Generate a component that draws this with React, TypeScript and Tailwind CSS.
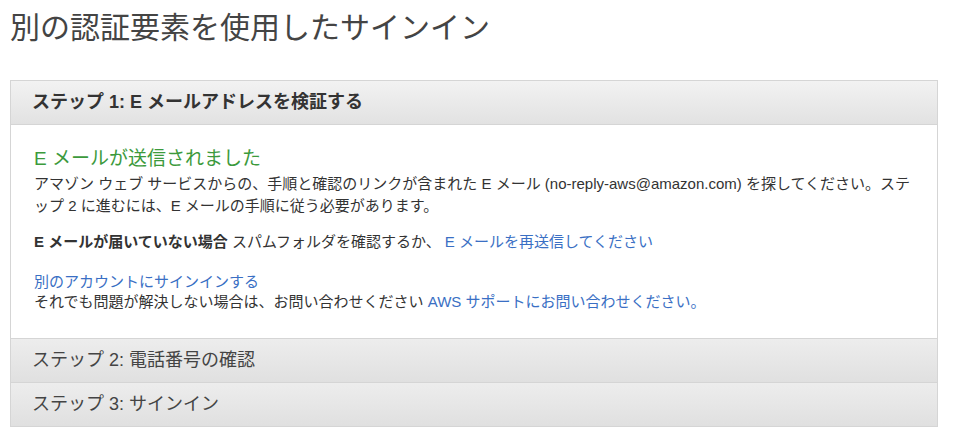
export default function App() {
  return (
    <div className="min-h-screen bg-white font-['Liberation_Sans','Noto_Sans_CJK_JP',sans-serif] text-[#333]">
      <div className="px-[10px] pt-[10px]">
        <h1 className="text-[30px] leading-[36px] font-normal text-[#444]">別の認証要素を使用したサインイン</h1>

        <div className="mt-[34px] w-[928px] border border-[#d5d5d5]">
          <div className="h-[44px] flex items-center px-[21px] bg-gradient-to-b from-[#f2f2f2] to-[#e2e2e2] border-b border-[#d5d5d5]">
            <span className="text-[18px] font-bold text-[#333]">ステップ 1: E メールアドレスを検証する</span>
          </div>

          <div className="bg-white px-[23px] pt-[21px] pb-[25px] text-[15px] leading-[22px]">
            <h2 className="text-[19px] leading-[26px] text-[#3c9a3c]">E メールが送信されました</h2>
            <p className="mt-[1px]">
              アマゾン ウェブ サービスからの、手順と確認のリンクが含まれた E メール (no-reply-aws@amazon.com) を探してください。ステップ 2 に進むには、E メールの手順に従う必要があります。
            </p>
            <p className="mt-[14px]">
              <span className="font-bold">E メールが届いていない場合</span> スパムフォルダを確認するか、
              <a className="ml-[4px] text-[#3a6fc4]" href="#">E メールを再送信してください</a>
            </p>
            <p className="mt-[18px]">
              <a className="text-[#3a6fc4]" href="#">別のアカウントにサインインする</a>
            </p>
            <p className="-mt-[2px]">
              それでも問題が解決しない場合は、お問い合わせください <a className="text-[#3a6fc4]" href="#">AWS サポートにお問い合わせください。</a>
            </p>
          </div>

          <div className="h-[44px] flex items-center px-[21px] bg-gradient-to-b from-[#ededed] to-[#e0e0e0] border-t border-[#d5d5d5]">
            <span className="text-[18px] text-[#444]">ステップ 2: 電話番号の確認</span>
          </div>
          <div className="h-[44px] flex items-center px-[21px] bg-gradient-to-b from-[#ededed] to-[#e0e0e0] border-t border-[#d5d5d5]">
            <span className="text-[18px] text-[#444]">ステップ 3: サインイン</span>
          </div>
        </div>
      </div>
    </div>
  );
}
